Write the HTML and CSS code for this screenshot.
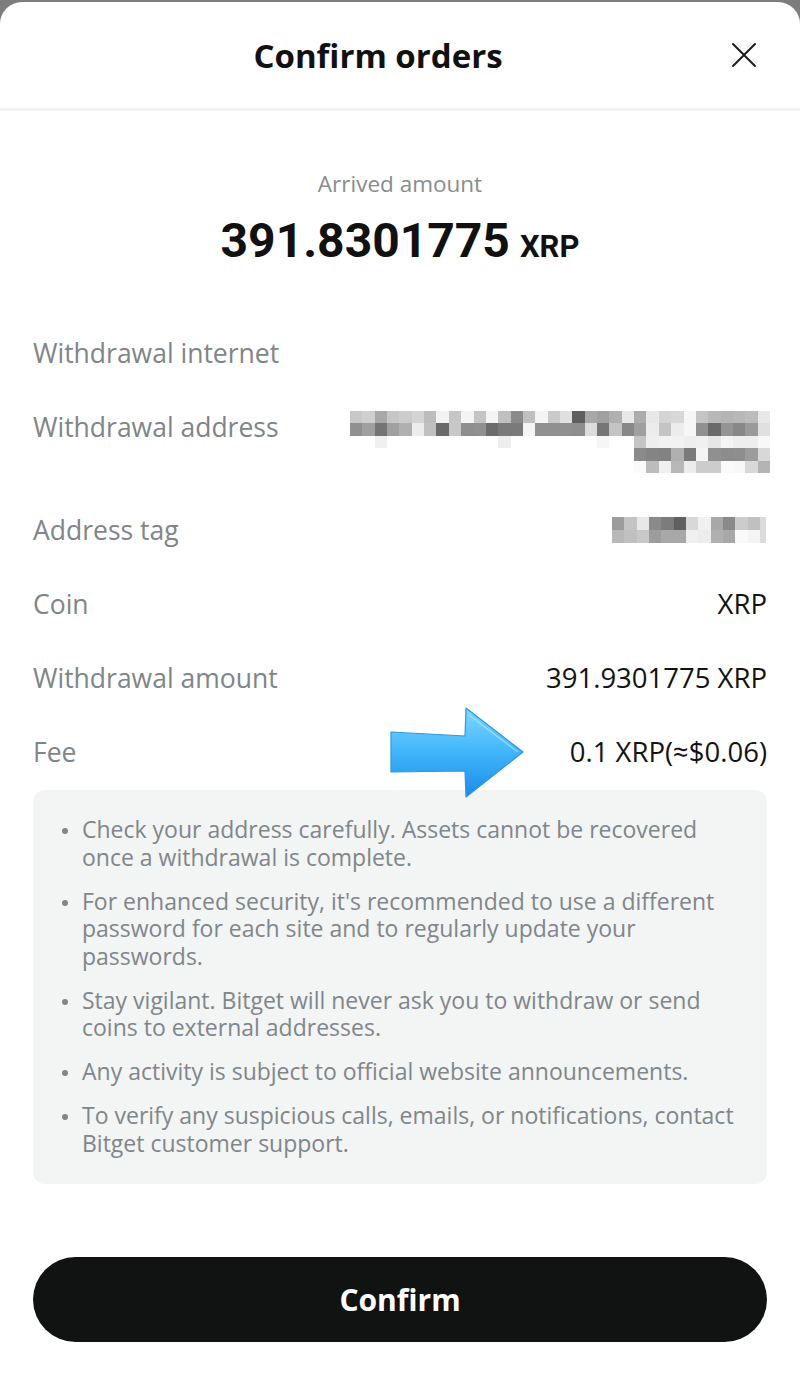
FILE: index.html
```html
<!DOCTYPE html>
<html lang="en">
  <head>
    <meta charset="UTF-8" />
    <meta name="viewport" content="width=device-width, initial-scale=1.0" />
    <title>Confirm orders</title>
    <link rel="stylesheet" href="styles.css">
  </head>
  <body>
    <div class="sheet">
      <div class="sheet-header">
        <h2 class="title">Confirm orders</h2>
        <button class="close" aria-label="Close">
          <svg width="26" height="26" viewBox="0 0 26 26">
            <path d="M2 2 L24 24 M24 2 L2 24" stroke="#1b1b1b" stroke-width="2" stroke-linecap="round" fill="none"/>
          </svg>
        </button>
      </div>

      <div class="content">
        <div class="arrived">
          <p class="arrived-label">Arrived amount</p>
          <p class="arrived-value">391.8301775<span class="unit">XRP</span></p>
        </div>

        <ul class="details">
          <li class="row">
            <span class="label">Withdrawal internet</span>
            <span class="value"></span>
          </li>
          <li class="row">
            <span class="label">Withdrawal address</span>
            <!-- pixelated (hidden) address -->
            <svg class="blur blur-address" width="420" height="62" viewBox="0 0 34 5" preserveAspectRatio="none" shape-rendering="crispEdges">
              <g>
                <rect x="0" y="0" width="1" height="1" fill="#c8c8c8"/><rect x="1" y="0" width="1" height="1" fill="#cfcfcf"/><rect x="2" y="0" width="1" height="1" fill="#a8a8a8"/><rect x="3" y="0" width="1" height="1" fill="#c6c6c6"/><rect x="4" y="0" width="1" height="1" fill="#cccccc"/><rect x="5" y="0" width="1" height="1" fill="#d4d4d4"/><rect x="6" y="0" width="1" height="1" fill="#bcbcbc"/><rect x="7" y="0" width="1" height="1" fill="#f2f2f2"/><rect x="8" y="0" width="1" height="1" fill="#c6c6c6"/><rect x="9" y="0" width="1" height="1" fill="#f4f4f4"/><rect x="10" y="0" width="1" height="1" fill="#c4c4c4"/><rect x="11" y="0" width="1" height="1" fill="#f4f4f4"/><rect x="12" y="0" width="1" height="1" fill="#c0c0c0"/><rect x="13" y="0" width="1" height="1" fill="#8a8a8a"/><rect x="14" y="0" width="1" height="1" fill="#c0c0c0"/><rect x="15" y="0" width="1" height="1" fill="#f4f4f4"/><rect x="16" y="0" width="1" height="1" fill="#cacaca"/><rect x="17" y="0" width="1" height="1" fill="#e0e0e0"/><rect x="18" y="0" width="1" height="1" fill="#5e5e5e"/><rect x="19" y="0" width="1" height="1" fill="#a8a8a8"/><rect x="20" y="0" width="1" height="1" fill="#a0a0a0"/><rect x="21" y="0" width="1" height="1" fill="#b0b0b0"/><rect x="22" y="0" width="1" height="1" fill="#e8e8e8"/><rect x="23" y="0" width="1" height="1" fill="#acacac"/><rect x="24" y="0" width="1" height="1" fill="#e8e8e8"/><rect x="25" y="0" width="1" height="1" fill="#d4d4d4"/><rect x="26" y="0" width="1" height="1" fill="#d8d8d8"/><rect x="27" y="0" width="1" height="1" fill="#f6f6f6"/><rect x="28" y="0" width="1" height="1" fill="#c4c4c4"/><rect x="29" y="0" width="1" height="1" fill="#b8b8b8"/><rect x="30" y="0" width="1" height="1" fill="#b4b4b4"/><rect x="31" y="0" width="1" height="1" fill="#b8b8b8"/><rect x="32" y="0" width="1" height="1" fill="#bcbcbc"/><rect x="33" y="0" width="1" height="1" fill="#e8e8e8"/>
              </g>
              <g>
                <rect x="0" y="1" width="1" height="1" fill="#909090"/><rect x="1" y="1" width="1" height="1" fill="#a0a0a0"/><rect x="2" y="1" width="1" height="1" fill="#747474"/><rect x="3" y="1" width="1" height="1" fill="#a0a0a0"/><rect x="4" y="1" width="1" height="1" fill="#b0b0b0"/><rect x="5" y="1" width="1" height="1" fill="#ececec"/><rect x="6" y="1" width="1" height="1" fill="#c0c0c0"/><rect x="7" y="1" width="1" height="1" fill="#6a6a6a"/><rect x="8" y="1" width="1" height="1" fill="#c8c8c8"/><rect x="9" y="1" width="1" height="1" fill="#8e8e8e"/><rect x="10" y="1" width="1" height="1" fill="#909090"/><rect x="11" y="1" width="1" height="1" fill="#6c6c6c"/><rect x="12" y="1" width="1" height="1" fill="#7a7a7a"/><rect x="13" y="1" width="1" height="1" fill="#7a7a7a"/><rect x="14" y="1" width="1" height="1" fill="#f4f4f4"/><rect x="15" y="1" width="1" height="1" fill="#909090"/><rect x="16" y="1" width="1" height="1" fill="#909090"/><rect x="17" y="1" width="1" height="1" fill="#909090"/><rect x="18" y="1" width="1" height="1" fill="#8e8e8e"/><rect x="19" y="1" width="1" height="1" fill="#dcdcdc"/><rect x="20" y="1" width="1" height="1" fill="#767676"/><rect x="21" y="1" width="1" height="1" fill="#c4c4c4"/><rect x="22" y="1" width="1" height="1" fill="#888888"/><rect x="23" y="1" width="1" height="1" fill="#a0a0a0"/><rect x="24" y="1" width="1" height="1" fill="#ececec"/><rect x="25" y="1" width="1" height="1" fill="#c4c4c4"/><rect x="26" y="1" width="1" height="1" fill="#ececec"/><rect x="27" y="1" width="1" height="1" fill="#f6f6f6"/><rect x="28" y="1" width="1" height="1" fill="#909090"/><rect x="29" y="1" width="1" height="1" fill="#6a6a6a"/><rect x="30" y="1" width="1" height="1" fill="#949494"/><rect x="31" y="1" width="1" height="1" fill="#888888"/><rect x="32" y="1" width="1" height="1" fill="#9a9a9a"/><rect x="33" y="1" width="1" height="1" fill="#e0e0e0"/>
              </g>
              <g>
                <rect x="2" y="2" width="1" height="1" fill="#f0f0f0"/><rect x="12" y="2" width="1" height="1" fill="#eeeeee"/><rect x="20" y="2" width="1" height="1" fill="#f6f6f6"/><rect x="23" y="2" width="1" height="1" fill="#c4c4c4"/><rect x="24" y="2" width="1" height="1" fill="#eeeeee"/><rect x="25" y="2" width="1" height="1" fill="#f2f2f2"/><rect x="26" y="2" width="1" height="1" fill="#f2f2f2"/><rect x="27" y="2" width="1" height="1" fill="#eeeeee"/><rect x="28" y="2" width="1" height="1" fill="#f0f0f0"/><rect x="29" y="2" width="1" height="1" fill="#e6e6e6"/><rect x="30" y="2" width="1" height="1" fill="#f4f4f4"/><rect x="31" y="2" width="1" height="1" fill="#eeeeee"/><rect x="32" y="2" width="1" height="1" fill="#eeeeee"/><rect x="33" y="2" width="1" height="1" fill="#f8f8f8"/>
              </g>
              <g>
                <rect x="23" y="3" width="1" height="1" fill="#8a8a8a"/><rect x="24" y="3" width="1" height="1" fill="#848484"/><rect x="25" y="3" width="1" height="1" fill="#828282"/><rect x="26" y="3" width="1" height="1" fill="#b0b0b0"/><rect x="27" y="3" width="1" height="1" fill="#7a7a7a"/><rect x="28" y="3" width="1" height="1" fill="#f4f4f4"/><rect x="29" y="3" width="1" height="1" fill="#909090"/><rect x="30" y="3" width="1" height="1" fill="#8c8c8c"/><rect x="31" y="3" width="1" height="1" fill="#8e8e8e"/><rect x="32" y="3" width="1" height="1" fill="#9c9c9c"/><rect x="33" y="3" width="1" height="1" fill="#d8d8d8"/>
              </g>
              <g>
                <rect x="23" y="4" width="1" height="1" fill="#fafafa"/><rect x="24" y="4" width="1" height="1" fill="#bcbcbc"/><rect x="25" y="4" width="1" height="1" fill="#f0f0f0"/><rect x="26" y="4" width="1" height="1" fill="#b8b8b8"/><rect x="27" y="4" width="1" height="1" fill="#ececec"/><rect x="28" y="4" width="1" height="1" fill="#cccccc"/><rect x="29" y="4" width="1" height="1" fill="#cccccc"/><rect x="30" y="4" width="1" height="1" fill="#fafafa"/><rect x="31" y="4" width="1" height="1" fill="#f8f8f8"/><rect x="32" y="4" width="1" height="1" fill="#d8d8d8"/><rect x="33" y="4" width="1" height="1" fill="#b4b4b4"/>
              </g>
            </svg>
          </li>
          <li class="row">
            <span class="label">Address tag</span>
            <svg class="blur blur-tag" width="154" height="26" viewBox="0 0 12.5 2" preserveAspectRatio="none" shape-rendering="crispEdges">
              <g>
                <rect x="0" y="0" width="1" height="1" fill="#9c9c9c"/><rect x="1" y="0" width="1" height="1" fill="#c4c4c4"/><rect x="2" y="0" width="1" height="1" fill="#e8e8e8"/><rect x="3" y="0" width="1" height="1" fill="#8a8a8a"/><rect x="4" y="0" width="1" height="1" fill="#7c7c7c"/><rect x="5" y="0" width="1" height="1" fill="#606060"/><rect x="6" y="0" width="1" height="1" fill="#d8d8d8"/><rect x="7" y="0" width="1" height="1" fill="#f0f0f0"/><rect x="8" y="0" width="1" height="1" fill="#a8a8a8"/><rect x="9" y="0" width="1" height="1" fill="#8a8a8a"/><rect x="10" y="0" width="1" height="1" fill="#cccccc"/><rect x="11" y="0" width="1" height="1" fill="#c0c0c0"/><rect x="12" y="0" width="0.5" height="1" fill="#dcdcdc"/>
              </g>
              <g>
                <rect x="0" y="1" width="1" height="1" fill="#b8b8b8"/><rect x="1" y="1" width="1" height="1" fill="#c0c0c0"/><rect x="2" y="1" width="1" height="1" fill="#c8c8c8"/><rect x="3" y="1" width="1" height="1" fill="#9c9c9c"/><rect x="4" y="1" width="1" height="1" fill="#a8a8a8"/><rect x="5" y="1" width="1" height="1" fill="#a8a8a8"/><rect x="6" y="1" width="1" height="1" fill="#f0f0f0"/><rect x="7" y="1" width="1" height="1" fill="#ececec"/><rect x="8" y="1" width="1" height="1" fill="#b0b0b0"/><rect x="9" y="1" width="1" height="1" fill="#a8a8a8"/><rect x="10" y="1" width="1" height="1" fill="#fafafa"/><rect x="11" y="1" width="1" height="1" fill="#f4f4f4"/><rect x="12" y="1" width="0.5" height="1" fill="#dcdcdc"/>
              </g>
            </svg>
          </li>
          <li class="row">
            <span class="label">Coin</span>
            <span class="value">XRP</span>
          </li>
          <li class="row">
            <span class="label">Withdrawal amount</span>
            <span class="value">391.9301775 XRP</span>
          </li>
          <li class="row row-fee">
            <span class="label">Fee</span>
            <span class="value">0.1 XRP(≈$0.06)</span>
            <!-- annotation arrow -->
            <svg class="pointer" width="134" height="92" viewBox="0 0 134 92">
              <defs>
                <linearGradient id="arrowFill" x1="0" y1="0" x2="0" y2="1">
                  <stop offset="0" stop-color="#7fd8ff"/>
                  <stop offset="0.45" stop-color="#45b9fb"/>
                  <stop offset="1" stop-color="#1a8be8"/>
                </linearGradient>
              </defs>
              <path d="M1 25 L75 29 L76 1 L133 45 L76 90 L75 64 L1 65 Z" fill="url(#arrowFill)" stroke="#2a97ec" stroke-width="1.2" stroke-linejoin="round"/>
              <path d="M79 8 L128 45" stroke="#a8e6ff" stroke-width="1.5" opacity="0.7"/>
            </svg>
          </li>
        </ul>

        <ul class="notice">
          <li>Check your address carefully. Assets cannot be recovered once a withdrawal is complete.</li>
          <li>For enhanced security, it's recommended to use a different password for each site and to regularly update your passwords.</li>
          <li>Stay vigilant. Bitget will never ask you to withdraw or send coins to external addresses.</li>
          <li>Any activity is subject to official website announcements.</li>
          <li>To verify any suspicious calls, emails, or notifications, contact Bitget customer support.</li>
        </ul>

        <button class="confirm">Confirm</button>
      </div>
    </div>
  </body>
</html>
```

FILE: styles.css
```css
* {
  margin: 0;
  padding: 0;
  box-sizing: border-box;
}
body {
  background-color: #7d7d7d;
  font-family: "Open Sans", "Noto Sans", sans-serif;
  color: #121212;
}
.sheet {
  margin-top: 2px;
  min-height: 1373px;
  background-color: white;
  border-radius: 22px 22px 0 0;
}
.sheet-header {
  display: flex;
  align-items: center;
  height: 109px;
  padding: 0 43px 0 25px;
  border-bottom: 3px solid #f3f3f3;
}
.title {
  flex: 1;
  text-align: center;
  font-size: 33px;
  font-weight: 700;
  color: #111;
}
.close {
  border: none;
  background: none;
  display: flex;
  cursor: pointer;
}
.content {
  padding: 0 33px;
}
.arrived {
  text-align: center;
  padding-top: 58px;
}
.arrived-label {
  font-size: 22.5px;
  line-height: 30px;
  color: #888c8e;
}
.arrived-value {
  margin-top: 14px;
  font-family: Roboto, sans-serif;
  font-size: 48px;
  line-height: 56px;
  font-weight: 700;
  color: #111;
}
.arrived-value .unit {
  font-size: 31px;
  line-height: 1;
  margin-left: 10px;
}
.details {
  list-style-type: none;
  margin-top: 67px;
}
.row {
  display: flex;
  justify-content: space-between;
  align-items: flex-start;
  margin-bottom: 40px;
  line-height: 34px;
  font-size: 26.5px;
}
.row .label {
  color: #7f8588;
}
.row .value {
  color: #131313;
  font-size: 27.5px;
}
.blur {
  display: block;
  margin-right: -3px;
}
.blur-address {
  margin-top: 1px;
}
.blur-tag {
  margin-top: 4px;
  margin-right: 1px;
}
.row-fee {
  position: relative;
  margin-bottom: 21px;
}
.pointer {
  position: absolute;
  left: 357px;
  top: -28px;
}
.notice {
  list-style-type: none;
  background-color: #f3f4f4;
  border-radius: 12px;
  padding: 26px 30px 27px 49px;
  display: flex;
  flex-direction: column;
  gap: 16.5px;
}
.notice li {
  position: relative;
  font-size: 23px;
  line-height: 27.5px;
  color: #80868a;
}
.notice li::before {
  content: "";
  position: absolute;
  left: -20px;
  top: 12px;
  width: 6px;
  height: 6px;
  border-radius: 50%;
  background-color: #80868a;
}
.confirm {
  display: block;
  width: 100%;
  height: 85px;
  margin-top: 73px;
  border: none;
  border-radius: 43px;
  background-color: #111313;
  color: white;
  font-family: "Open Sans", "Noto Sans", sans-serif;
  font-size: 30px;
  font-weight: 700;
  cursor: pointer;
}
```
